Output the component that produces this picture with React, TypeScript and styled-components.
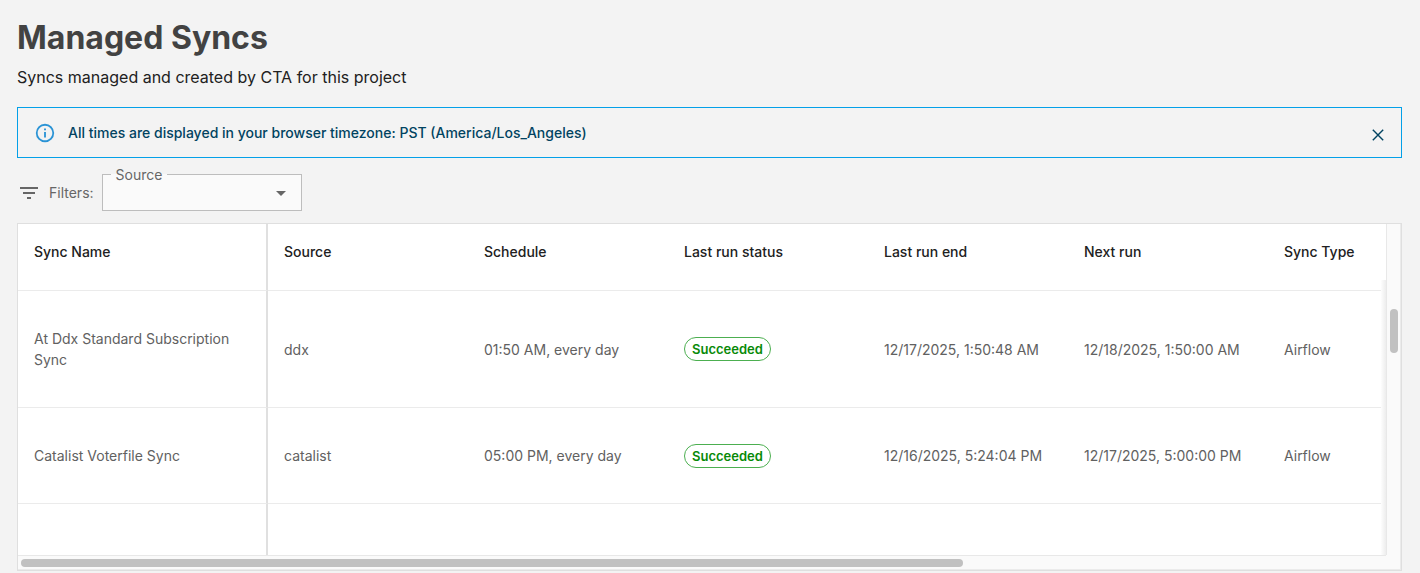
import React from "react";
import styled, { createGlobalStyle } from "styled-components";

const GlobalStyle = createGlobalStyle`
  *, *::before, *::after { box-sizing: border-box; }
  body {
    margin: 0;
    background: #f3f3f3;
    color: #212121;
    font-family: Inter, "Liberation Sans", sans-serif;
    font-size: 14px;
    line-height: 21px;
  }
`;

const Page = styled.main`
  display: flex;
  flex-direction: column;
  height: 100vh;
  min-height: 480px;
  padding: 17px 18px 2px 17px;
`;

const Title = styled.h1`
  margin: 0;
  color: #424242;
  font-size: 32px;
  line-height: 41px;
  font-weight: 700;
`;

const Subtitle = styled.p`
  margin: 7px 0 18px;
  font-size: 16px;
  line-height: 24px;
`;

const Alert = styled.div`
  display: flex;
  padding: 6px 16px;
  border: 1px solid #03a0e8;
  color: #014361;
  font-weight: 500;
`;

const AlertIcon = styled.span`
  display: flex;
  margin-right: 12px;
  padding: 8px 0 7px;
  color: #2a93d5;
`;

const AlertMessage = styled.div`
  flex: 1;
  padding: 8px 0;
`;

const CloseButton = styled.button`
  display: flex;
  align-self: center;
  margin: 4px -8px 0 16px;
  padding: 5px;
  border: 0;
  background: none;
  color: inherit;
  cursor: pointer;
`;

const Icon = styled.svg<{ $size: number }>`
  display: block;
  width: ${(p) => p.$size}px;
  height: ${(p) => p.$size}px;
  fill: currentColor;
`;

const Filters = styled.div`
  display: flex;
  align-items: center;
  gap: 8px;
  margin: 16px 0 12px;
  color: #666;
`;

const Field = styled.div`
  position: relative;
  width: 200px;
  height: 37px;
  border: 1px solid #bdbdbd;
  background: #fafafa;
`;

const FieldLabel = styled.label`
  position: absolute;
  top: -1px;
  left: 8px;
  height: 1px;
  padding: 0 5px;
  background: #fafafa;
  line-height: 1px;
`;

const Select = styled.select`
  width: 100%;
  height: 100%;
  padding: 0 32px 0 14px;
  border: 0;
  background: transparent;
  color: inherit;
  font: inherit;
  appearance: none;
`;

const SelectArrow = styled.span`
  position: absolute;
  top: 6px;
  right: 8px;
  pointer-events: none;
`;

const Frame = styled.section`
  display: grid;
  flex: 1;
  grid-template-columns: minmax(0, 1fr) 15px;
  grid-template-rows: minmax(0, 1fr) 15px;
  min-height: 0;
  border: 1px solid #dfdfdf;
  background: #fafafa;
`;

const Viewport = styled.div`
  position: relative;
  overflow: hidden;
  background: #fff;
`;

const EdgeShadow = styled.div`
  position: absolute;
  top: 56px;
  right: 0;
  bottom: 0;
  width: 5px;
  background: linear-gradient(to right, #fdfdfd, #ededed);
`;

const VerticalTrack = styled.div`
  padding: 85px 2px 0 3px;
  border-left: 1px solid #e8e8e8;
  border-right: 1px solid #ebebeb;
`;

const HorizontalTrack = styled.div`
  padding: 3px 0 0 3px;
  border-top: 1px solid #e8e8e8;
  border-bottom: 1px solid #ebebeb;
`;

const Corner = styled.div`
  border-right: 1px solid #ebebeb;
  border-bottom: 1px solid #ebebeb;
`;

const Thumb = styled.div<{ $width: string; $height: string }>`
  width: ${(p) => p.$width};
  height: ${(p) => p.$height};
  border-radius: 4px;
  background: #c1c1c1;
`;

const Table = styled.table`
  width: 1450px;
  border-collapse: separate;
  border-spacing: 0;
  table-layout: fixed;
`;

const HeadCell = styled.th`
  width: 200px;
  height: 67px;
  padding: 17px 16px;
  border-bottom: 1px solid #ebebeb;
  font-weight: 500;
  text-align: left;
  vertical-align: top;

  &:first-child {
    width: 250px;
    border-right: 2px solid #e0e0e0;
  }
`;

const Cell = styled.td<{ $tall?: boolean }>`
  height: ${(p) => (p.$tall ? 117 : 96)}px;
  padding: 0 16px;
  border-bottom: 1px solid #ebebeb;
  color: #616161;

  &:first-child {
    border-right: 2px solid #e0e0e0;
  }
`;

const Status = styled.span`
  display: inline-block;
  padding: 0 7px;
  border: 1px solid #4caf50;
  border-radius: 12px;
  color: #088a08;
  font-size: 13px;
  line-height: 22px;
  font-weight: 600;
  vertical-align: middle;
`;

const columns = ["Sync Name", "Source", "Schedule", "Last run status", "Last run end", "Next run", "Sync Type"];

interface Sync {
  name: string;
  source: string;
  schedule: string;
  status: string;
  ended: string;
  next: string;
  type: string;
  tall?: boolean;
}

const syncs: Sync[] = [
  {
    name: "At Ddx Standard Subscription Sync",
    source: "ddx",
    schedule: "01:50 AM, every day",
    status: "Succeeded",
    ended: "12/17/2025, 1:50:48 AM",
    next: "12/18/2025, 1:50:00 AM",
    type: "Airflow",
    tall: true,
  },
  {
    name: "Catalist Voterfile Sync",
    source: "catalist",
    schedule: "05:00 PM, every day",
    status: "Succeeded",
    ended: "12/16/2025, 5:24:04 PM",
    next: "12/17/2025, 5:00:00 PM",
    type: "Airflow",
  },
];

export default function App() {
  return (
    <Page>
      <GlobalStyle />
      <Title>Managed Syncs</Title>
      <Subtitle>Syncs managed and created by CTA for this project</Subtitle>

      <Alert role="status">
        <AlertIcon>
          <Icon $size={22} viewBox="0 0 24 24" aria-hidden="true">
            <path d="M11,9H13V7H11M12,20C7.59,20 4,16.41 4,12C4,7.59 7.59,4 12,4C16.41,4 20,7.59 20,12C20,16.41 16.41,20 12,20M12,2A10,10 0 0,0 2,12A10,10 0 0,0 12,22A10,10 0 0,0 22,12A10,10 0 0,0 12,2M11,17H13V11H11V17Z" />
          </Icon>
        </AlertIcon>
        <AlertMessage>All times are displayed in your browser timezone: PST (America/Los_Angeles)</AlertMessage>
        <CloseButton type="button" aria-label="Close">
          <Icon $size={20} viewBox="0 0 20 20" aria-hidden="true">
            <path d="M4.8 4.8L15.2 15.2M15.2 4.8L4.8 15.2" fill="none" stroke="currentColor" strokeWidth="1.4" />
          </Icon>
        </CloseButton>
      </Alert>

      <Filters>
        <Icon $size={24} viewBox="0 0 24 24" aria-hidden="true">
          <path d="M10 18h4v-2h-4v2zM3 6v2h18V6H3zm3 7h12v-2H6v2z" />
        </Icon>
        <span>Filters:</span>
        <Field>
          <FieldLabel htmlFor="source">Source</FieldLabel>
          <Select id="source" defaultValue="">
            <option value="" />
            <option value="ddx">ddx</option>
            <option value="catalist">catalist</option>
          </Select>
          <SelectArrow>
            <Icon $size={24} viewBox="0 0 24 24" aria-hidden="true">
              <path d="M7 10l5 5 5-5z" />
            </Icon>
          </SelectArrow>
        </Field>
      </Filters>

      <Frame>
        <Viewport>
          <Table>
            <thead>
              <tr>
                {columns.map((column) => (
                  <HeadCell key={column} scope="col">{column}</HeadCell>
                ))}
              </tr>
            </thead>
            <tbody>
              {syncs.map((sync) => (
                <tr key={sync.name}>
                  <Cell $tall={sync.tall}>{sync.name}</Cell>
                  <Cell>{sync.source}</Cell>
                  <Cell>{sync.schedule}</Cell>
                  <Cell><Status>{sync.status}</Status></Cell>
                  <Cell>{sync.ended}</Cell>
                  <Cell>{sync.next}</Cell>
                  <Cell>{sync.type}</Cell>
                </tr>
              ))}
              <tr>
                {columns.map((column) => (
                  <Cell key={column} />
                ))}
              </tr>
            </tbody>
          </Table>
          <EdgeShadow />
        </Viewport>
        <VerticalTrack>
          <Thumb $width="8px" $height="44px" />
        </VerticalTrack>
        <HorizontalTrack>
          <Thumb $width="69%" $height="8px" />
        </HorizontalTrack>
        <Corner />
      </Frame>
    </Page>
  );
}
